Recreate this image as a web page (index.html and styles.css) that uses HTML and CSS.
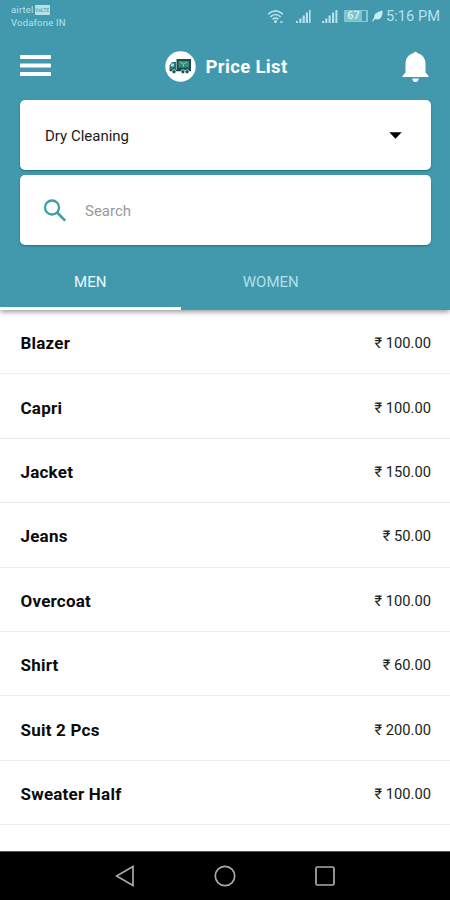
FILE: index.html
```html
<!DOCTYPE html>
<html lang="en">
<head>
<meta charset="utf-8">
<title>Price List</title>
<link rel="stylesheet" href="styles.css">
</head>
<body>
<div class="screen">
  <header class="header">
    <div class="status">
      <div class="carriers">
        <div class="carrier">airtel <span class="volte">VoLTE</span></div>
        <div class="carrier">Vodafone IN</div>
      </div>
      <div class="indicators">
        <svg class="wifi" width="17" height="15" viewBox="0 0 17 15" fill="none" stroke="currentColor" stroke-width="1.6"><path d="M1 5.2Q8.5-1.6 16 5.2M3.3 7.8Q8.5 3.2 13.700 7.800M5.600 10.300Q8.500 8 11.400 10.300"/><circle cx="8.500" cy="12.500" r=".7"/><path d="M13 13h3" stroke-width="1.300"/></svg>
        <svg class="signal" width="16" height="15" viewBox="0 0 16 15" fill="currentColor"><path d="M1 12h2v2H1zM4.300 9.500h2.200V14H4.300zM7.600 6.500h2.200V14H7.600zM10.800 3.500H13V14h-2.200zM14 1h1.600v13H14z"/></svg>
        <svg class="signal second" width="16" height="15" viewBox="0 0 16 15" fill="currentColor"><path d="M0 12h2.200v2H0zM3.200 9.500h2.200V14H3.200zM6.500 6.500h2.200V14H6.500zM10 3.500h2.200V14H10zM13.400 1h2v13h-2z"/></svg>
        <div class="battery"><span class="level">67</span></div>
        <svg class="leaf" width="11" height="12" viewBox="0 0 11 12"><path d="M10.500.5Q11 9.500 5 9.500L3 9 1 11.500 0 11 2 8Q1 2.500 10.500.5Z" fill="currentColor"/></svg>
        <span class="clock">5:16 PM</span>
      </div>
    </div>
    <div class="appbar">
      <svg class="menu" width="31" height="22" viewBox="0 0 31 22" fill="#fff"><rect width="31" height="4" rx=".7"/><rect y="8.500" width="31" height="4" rx=".7"/><rect y="17" width="31" height="4" rx=".7"/></svg>
      <div class="brand">
        <svg width="31" height="31" viewBox="0 0 31 31"><circle cx="15.500" cy="15.500" r="15.200" fill="#fff"/><path d="M11.500 8h14.500v12H11.500z" fill="#174d50"/><path d="M13.500 10h10.500v6.500H13.500z" fill="#348d74"/><path d="M15 11l3.500 2L22 11M18.500 13v3" stroke="#8bc795" fill="none"/><path d="M4.500 14.500L7 11h4v9H4.500z" fill="#257379"/><path d="M6.500 12.500H9v3H5.500z" fill="#b9dad5"/><path d="M5 19.500h21" stroke="#123f49" stroke-width="1.500"/><g fill="#174b55" stroke="#fff" stroke-width=".7"><circle cx="9" cy="20.700" r="2"/><circle cx="18" cy="20.700" r="2"/><circle cx="22" cy="20.700" r="2"/></g></svg>
        <h1 class="title">Price List</h1>
      </div>
      <svg class="bell" width="27" height="33" viewBox="0 0 27 33" fill="#fff"><path d="M11.400 3.200a2.200 2.200 0 0 1 4.200 0C21 4.500 23.500 8.700 23.500 14v8.500L26.500 26v1H.5v-1l3-3.500V14c0-5.300 2.500-9.500 7.900-10.800ZM10.300 28.500h6.400Q16.300 32 13.500 32T10.300 28.500Z"/></svg>
    </div>
    <div class="card">
      <span>Dry Cleaning</span>
      <svg width="13" height="7" viewBox="0 0 13 7"><path d="M.3.3h12.400L6.500 6.700Z" fill="#000"/></svg>
    </div>
    <div class="card search">
      <svg width="24" height="24" viewBox="0 0 24 24" fill="none" stroke="#3b9fa5"><circle cx="9" cy="8.500" r="7" stroke-width="2.300"/><path d="M14 13.500l8.200 8.200" stroke-width="2.600"/></svg>
      <span class="placeholder">Search</span>
    </div>
    <nav class="tabs">
      <div class="tab active">MEN</div>
      <div class="tab">WOMEN</div>
    </nav>
  </header>
  <main class="list">
    <div class="row"><span class="name">Blazer</span><span class="price">₹ 100.00</span></div>
    <div class="row"><span class="name">Capri</span><span class="price">₹ 100.00</span></div>
    <div class="row"><span class="name">Jacket</span><span class="price">₹ 150.00</span></div>
    <div class="row"><span class="name">Jeans</span><span class="price">₹ 50.00</span></div>
    <div class="row"><span class="name">Overcoat</span><span class="price">₹ 100.00</span></div>
    <div class="row"><span class="name">Shirt</span><span class="price">₹ 60.00</span></div>
    <div class="row"><span class="name">Suit 2 Pcs</span><span class="price">₹ 200.00</span></div>
    <div class="row"><span class="name">Sweater Half</span><span class="price">₹ 100.00</span></div>
  </main>
  <footer class="navbar">
    <svg width="20" height="22" viewBox="0 0 20 22"><path d="M18 1.500v19L1.500 11Z"/></svg>
    <svg width="22" height="22" viewBox="0 0 22 22"><circle cx="11" cy="11" r="9.700"/></svg>
    <svg width="20" height="20" viewBox="0 0 20 20"><rect x="1" y="1" width="18" height="18" rx="1.500"/></svg>
  </footer>
</div>
</body>
</html>
```
FILE: styles.css
```css
* { box-sizing: border-box; }
body { margin: 0; font-family: Roboto, "Noto Sans", sans-serif; background: #fff; }
svg { display: block; flex: none; }
.screen { width: 450px; height: 900px; display: flex; flex-direction: column; overflow: hidden; }
.header { height: 310px; flex: none; background: #4299ae; box-shadow: 0 2px 5px rgba(0,0,0,.4); display: flex; flex-direction: column; position: relative; }
.status { height: 32px; display: flex; justify-content: space-between; padding: 3px 10px 0 11px; color: #b5e2ea; }
.carriers { font-size: 9.5px; line-height: 14px; }
.carrier { display: flex; align-items: center; gap: 1px; height: 13.500px; letter-spacing: .2px; white-space: nowrap; }
.volte { background: #b5e2ea; color: #67a7b7; font-size: 5px; font-weight: 700; line-height: 10px; width: 15px; text-align: center; border-radius: 1px; letter-spacing: 0; }
.indicators { display: flex; align-items: center; height: 26px; }
.signal { margin-left: 11px; }
.signal.second { margin-left: 11px; }
.battery { width: 24px; height: 12px; margin-left: 6px; border: 1px solid #8bc7d3; border-right-width: 2px; border-radius: 1px; }
.level { display: block; width: 17px; height: 10px; background: #82c2cf; color: #d3f2f5; font-size: 11px; line-height: 10px; text-align: center; font-weight: 500; }
.leaf { margin: 0 3px 0 4px; color: #c7edf1; }
.clock { font-size: 14.700px; line-height: 20px; width: 54px; white-space: nowrap; }
.appbar { height: 68px; display: flex; align-items: center; justify-content: space-between; padding: 0 21px 0 20px; }
.brand { display: flex; align-items: center; gap: 10px; margin-left: 3px; }
.title { margin: 0; padding-top: 1px; color: #fff; font-size: 18.500px; letter-spacing: .35px; line-height: 24px; font-weight: 700; width: 86px; white-space: nowrap; }
.card { height: 70px; margin: 0 19px 5px 20px; padding: 1px 29px 0 25px; background: #fff; border-radius: 5px; display: flex; align-items: center; justify-content: space-between; font-size: 15px; color: #1b1b1b; box-shadow: 0 1px 2px rgba(0,70,85,.5); }
.search { justify-content: flex-start; gap: 18px; padding-left: 23px; margin-bottom: 0; }
.placeholder { color: #999; }
.tabs { display: flex; flex: 1; }
.tab { width: 180.500px; padding-top: 28px; line-height: 18px; text-align: center; font-size: 15px; color: #afe0e9; border-bottom: 3px solid transparent; }
.tab.active { color: #e9faff; border-bottom-color: #fff; }
.list { height: 541px; flex: none; }
.row { height: 64.400px; display: flex; justify-content: space-between; align-items: center; padding: 3px 19px 0 20.500px; border-bottom: 1px solid #ededed; }
.name { font-size: 17px; letter-spacing: .22px; font-weight: 700; color: #0b0b0b; }
.price { font-size: 14.700px; color: #1b1b1b; }
.navbar { flex: 1; border-top: 1px solid #555; background: #000; display: flex; align-items: center; justify-content: space-between; padding: 0 115px; }
.navbar svg { fill: none; stroke: #aaa; stroke-width: 1.700; }
```
